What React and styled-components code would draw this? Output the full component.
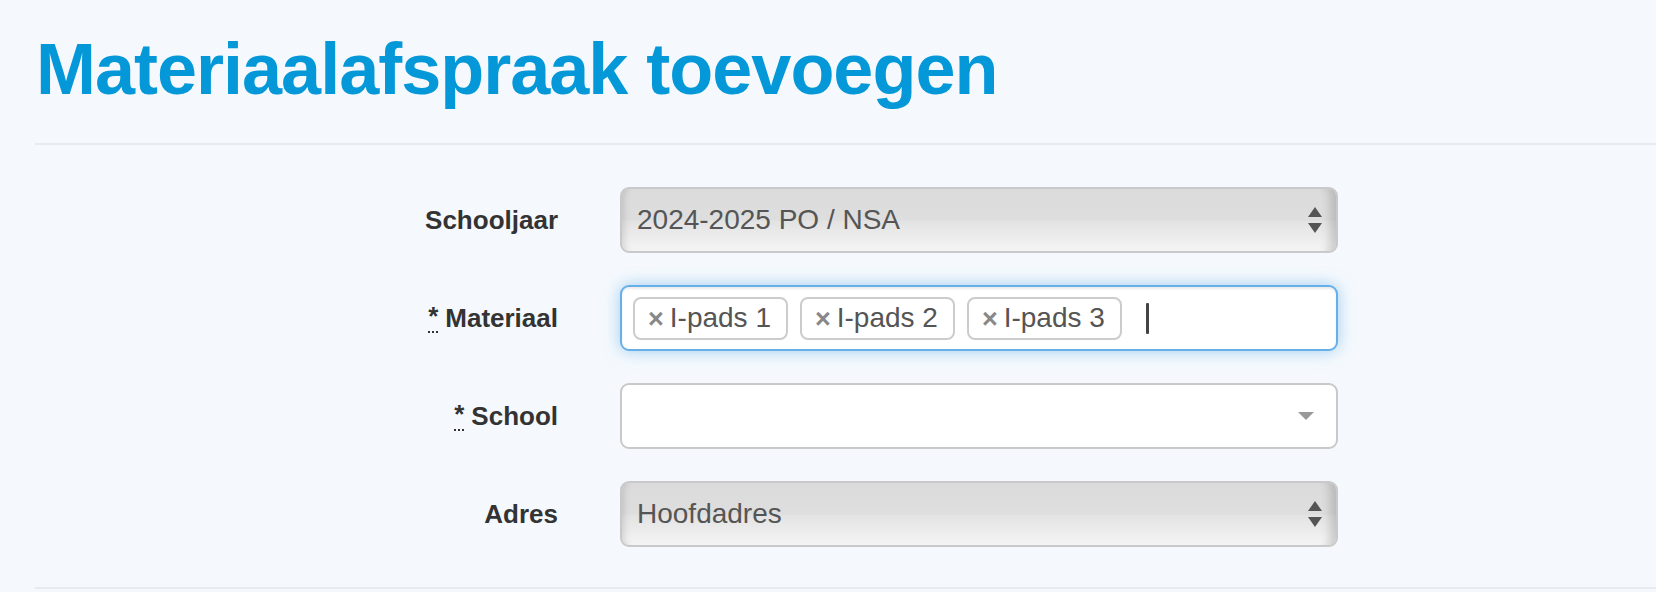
import React from 'react';
import styled, { createGlobalStyle } from 'styled-components';

const GlobalStyle = createGlobalStyle`
  html, body {
    margin:0;
    padding:0;
    background:#f5f9fd;
    font-family:"Liberation Sans", Arial, sans-serif;
  }
`

const Page = styled.div`
  padding-left:35px;
  padding-top:33px;
  min-height:592px;
  box-sizing:border-box;
`

const Title = styled.h1`
  margin:0;
  font-size:72px;
  line-height:1;
  font-weight:700;
  color:#0498d8;
  letter-spacing:-1px;
  padding-left:1px;
`

const Rule = styled.hr`
  border:0;
  height:2px;
  margin:${props => props.top}px 0 0 0;
  background:#e7eaee;
`

const Form = styled.div`
  display:grid;
  grid-template-columns:523px 718px;
  column-gap:62px;
  row-gap:32px;
  padding-top:42px;
  padding-bottom:40px;
`

const Label = styled.label`
  display:flex;
  align-items:center;
  justify-content:flex-end;
  font-size:26px;
  font-weight:700;
  color:#333333;
`

const Required = styled.abbr`
  text-decoration:none;
  border-bottom:2px dotted #333333;
  line-height:1.05;
  margin-right:7px;
  cursor:help;
`

const Field = styled.div`
  height:66px;
  box-sizing:border-box;
  border:2px solid ${props => props.focus ? '#66afe9' : '#c9c9c9'};
  border-radius:9px;
  display:flex;
  align-items:center;
  font-size:28px;
  color:#555555;
`

const SelectBox = styled(Field)`
  padding:0 14px 0 15px;
  justify-content:space-between;
  background:linear-gradient(to bottom, #dbdbdb 0%, #dedede 50%, #e3e3e3 52%, #f4f4f4 100%);
  box-shadow:inset 9px 0 7px -7px rgba(0,0,0,0.13), inset -16px 0 10px -10px rgba(0,0,0,0.16);
`

const TagBox = styled(Field)`
  background:#ffffff;
  padding:0 11px;
  gap:12px;
  box-shadow:inset 0 2px 2px rgba(0,0,0,0.075), 0 0 16px rgba(102,175,233,0.6);
`

const Tag = styled.span`
  height:43px;
  box-sizing:border-box;
  display:flex;
  align-items:center;
  padding:0 15px 0 13px;
  border:2px solid #cccccc;
  border-radius:8px;
  background:#ffffff;
  color:#555555;
`

const Remove = styled.span`
  color:#888888;
  font-weight:700;
  font-size:27px;
  line-height:1;
  margin-right:6px;
  transform:translateY(1px);
`

const Caret = styled.span`
  width:3px;
  height:31px;
  border-radius:1px;
  background:#444444;
  margin-left:12px;
`

const Combo = styled(Field)`
  background:#ffffff;
  justify-content:flex-end;
  padding-right:22px;
`

const UpDown = () => (
  <svg width="14" height="27" viewBox="0 0 14 27">
    <polygon points="7,0 14,10 0,10" fill="#555555" />
    <polygon points="0,16 14,16 7,26" fill="#555555" />
  </svg>
)

const DownCaret = () => (
  <svg width="16" height="9" viewBox="0 0 16 9">
    <polygon points="0,0 16,0 8,8" fill="#999999" />
  </svg>
)

const tags = ['I-pads 1', 'I-pads 2', 'I-pads 3'];

const App = () => (
  <Page>
    <GlobalStyle />
    <Title>Materiaalafspraak toevoegen</Title>
    <Rule top={38} />
    <Form>
      <Label>Schooljaar</Label>
      <SelectBox>
        <span>2024-2025 PO / NSA</span>
        <UpDown />
      </SelectBox>

      <Label><Required title="verplicht">*</Required>Materiaal</Label>
      <TagBox focus>
        {tags.map(t => (
          <Tag key={t}><Remove>×</Remove>{t}</Tag>
        ))}
        <Caret />
      </TagBox>

      <Label><Required title="verplicht">*</Required>School</Label>
      <Combo>
        <DownCaret />
      </Combo>

      <Label>Adres</Label>
      <SelectBox>
        <span>Hoofdadres</span>
        <UpDown />
      </SelectBox>
    </Form>
    <Rule top={0} />
  </Page>
)

export default App;
